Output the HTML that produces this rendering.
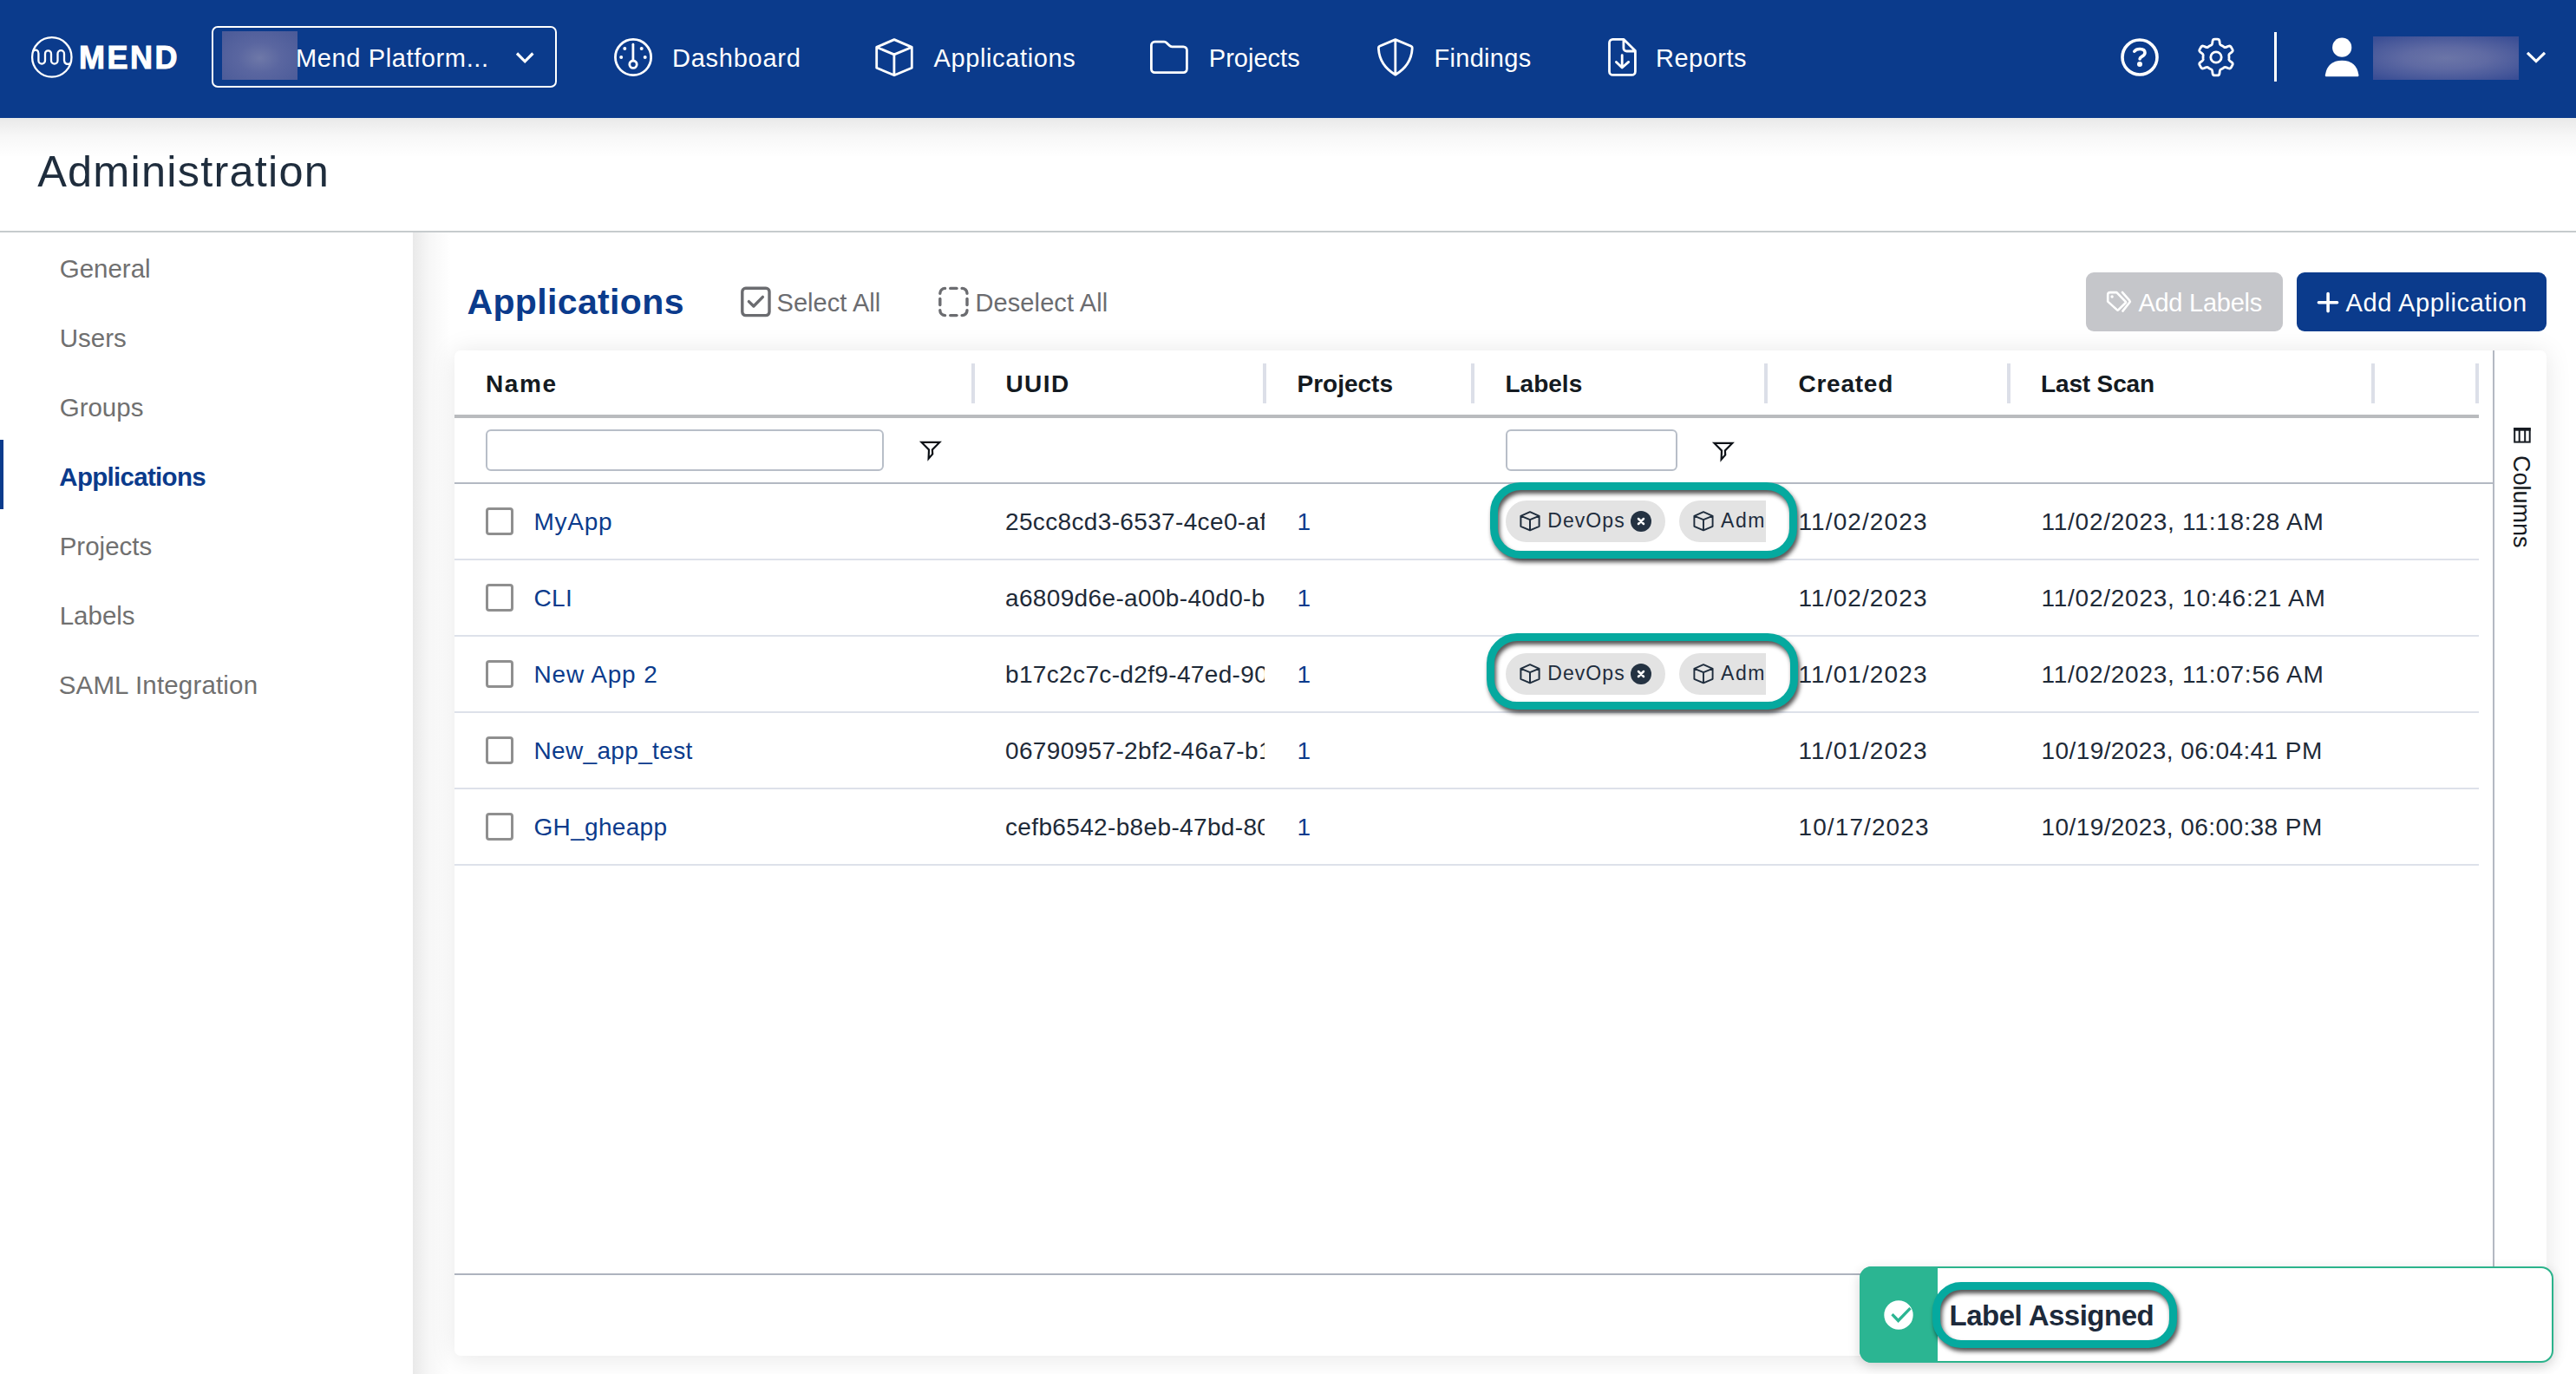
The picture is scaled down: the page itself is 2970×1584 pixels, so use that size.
<!DOCTYPE html>
<html><head><meta charset="utf-8"><title>Mend - Administration</title>
<style>
html,body{margin:0;padding:0;width:2970px;height:1584px;overflow:hidden;background:#fff;position:relative}
.a{position:absolute}
.t{position:absolute;white-space:nowrap;font-family:"Liberation Sans",sans-serif}
svg{overflow:visible}
</style></head><body>
<div class="a" style="left:0px;top:0px;width:2970px;height:136px;background:#0b3b8c"></div>
<div class="a" style="left:0px;top:136px;width:2970px;height:46px;background:linear-gradient(rgba(0,0,0,0.085),rgba(0,0,0,0.03) 45%,rgba(0,0,0,0))"></div>
<svg class="a" style="left:30px;top:36px;" width="60" height="60" viewBox="0 0 60 60"><g fill="none" stroke="#fff" stroke-width="2.3" stroke-linecap="round"><circle cx="29.8" cy="29.9" r="22.7"/><path d="M8.6 22.6 C11.5 20.8 14.2 21.5 14.4 25.5 L14.4 33.8 A3.8 3.8 0 0 0 22 33.8 L22 25.9 A3.5 3.5 0 0 1 29 25.9 L29 33.8 A3.75 3.75 0 0 0 36.5 33.8 L36.5 25.9 A3.75 3.75 0 0 1 44 25.9 L44 33.6 C44.2 37.4 47 38.6 50.6 37.4"/></g></svg>
<div class="t" style="left:91.00px;top:48.53px;font-size:36px;line-height:36px;color:#fff;font-weight:700;letter-spacing:2.5px;-webkit-text-stroke:1px #fff;">MEND</div>
<div class="a" style="left:244px;top:30px;width:398px;height:71px;border:2px solid #fff;border-radius:7px;box-sizing:border-box"></div>
<div class="a" style="left:256px;top:36px;width:87px;height:56px;background:radial-gradient(ellipse at 50% 55%,#6e78a8 0%,#5a66a0 40%,#4a5a98 100%)"></div>
<div class="t" style="left:341.00px;top:52.95px;font-size:29px;line-height:29px;color:#fff;font-weight:400;letter-spacing:0.62px;">Mend Platform...</div>
<svg class="a" style="left:590px;top:56px;" width="30" height="22" viewBox="0 0 30 22"><path d="M6 5.5 L15.2 14.8 L24.4 5.5" fill="none" stroke="#fff" stroke-width="3.2"/></svg>
<svg class="a" style="left:700px;top:36px;" width="60" height="60" viewBox="0 0 60 60"><g fill="none" stroke="#fff" stroke-width="2.8" stroke-linecap="round" stroke-linejoin="round"><circle cx="30.05" cy="30.05" r="20.6"/><path d="M29.9 15.2 L29.9 33.6"/><circle cx="30" cy="38.2" r="4.2"/></g><g fill="#fff"><circle cx="20.3" cy="20.1" r="2"/><circle cx="39.7" cy="20.1" r="2"/><circle cx="16.2" cy="30.1" r="2"/><circle cx="43.7" cy="30.1" r="2"/></g></svg>
<div class="t" style="left:775.00px;top:52.95px;font-size:29px;line-height:29px;color:#fff;font-weight:400;letter-spacing:0.75px;">Dashboard</div>
<svg class="a" style="left:1000px;top:36px;" width="60" height="60" viewBox="0 0 60 60"><g fill="none" stroke="#fff" stroke-width="2.8" stroke-linecap="round" stroke-linejoin="round"><path d="M31 9.6 L51.3 18.4 L51.3 42.2 L31 50.8 L10.7 42.2 L10.7 18.4 Z M10.9 18.5 L30.9 26.9 L51.1 18.5 M30.9 26.9 L30.9 50.6"/></g></svg>
<div class="t" style="left:1076.50px;top:52.95px;font-size:29px;line-height:29px;color:#fff;font-weight:400;letter-spacing:0.62px;">Applications</div>
<svg class="a" style="left:1318px;top:36px;" width="60" height="60" viewBox="0 0 60 60"><g fill="none" stroke="#fff" stroke-width="2.8" stroke-linecap="round" stroke-linejoin="round"><path d="M9.4 16.2 A4 4 0 0 1 13.4 12.2 L24.2 12.2 Q25.9 12.2 27.1 13.4 L30.3 16.6 Q31.5 17.8 33.2 17.8 L46.4 17.8 A4 4 0 0 1 50.4 21.8 L50.4 43.6 A4 4 0 0 1 46.4 47.6 L13.4 47.6 A4 4 0 0 1 9.4 43.6 Z"/></g></svg>
<div class="t" style="left:1393.80px;top:52.95px;font-size:29px;line-height:29px;color:#fff;font-weight:400;letter-spacing:0.02px;">Projects</div>
<svg class="a" style="left:1578px;top:36px;" width="60" height="60" viewBox="0 0 60 60"><g fill="none" stroke="#fff" stroke-width="2.8" stroke-linecap="round" stroke-linejoin="round"><path d="M30.8 9.6 L12.6 17.3 Q11.2 17.9 11.4 20.2 Q12.6 39.5 30.8 50.2 Q49 39.5 50.2 20.2 Q50.4 17.9 49 17.3 Z M30.8 9.8 L30.8 50"/></g></svg>
<div class="t" style="left:1653.50px;top:52.95px;font-size:29px;line-height:29px;color:#fff;font-weight:400;letter-spacing:0.3px;">Findings</div>
<svg class="a" style="left:1840px;top:36px;" width="60" height="60" viewBox="0 0 60 60"><g fill="none" stroke="#fff" stroke-width="2.8" stroke-linecap="round" stroke-linejoin="round"><path d="M19.5 9.4 L32.2 9.4 L45.4 22.6 L45.4 46.4 A4 4 0 0 1 41.4 50.4 L19.5 50.4 A4 4 0 0 1 15.5 46.4 L15.5 13.4 A4 4 0 0 1 19.5 9.4 Z M31.9 9.6 L31.9 19.4 A3.6 3.6 0 0 0 35.5 23 L45.2 23 M30.2 27.6 L30.2 41.8 M23.4 35.4 L30.2 42 L37.7 35.4"/></g></svg>
<div class="t" style="left:1909.00px;top:52.95px;font-size:29px;line-height:29px;color:#fff;font-weight:400;letter-spacing:0.5px;">Reports</div>
<svg class="a" style="left:2436px;top:36px;" width="60" height="60" viewBox="0 0 60 60"><g fill="none" stroke="#fff" stroke-width="3.6" stroke-linecap="round" stroke-linejoin="round"><circle cx="31" cy="30" r="20"/><path d="M24.8 23.2 Q26.8 20.5 31.2 20.5 Q37 20.6 37 24.7 Q37 27.3 33.6 29.1 Q31.2 30.4 31.1 31.9"/></g><circle cx="31" cy="38" r="3" fill="#fff"/></svg>
<svg class="a" style="left:2525px;top:36px;" width="60" height="60" viewBox="0 0 60 60"><g fill="none" stroke="#fff" stroke-width="2.8" stroke-linecap="round" stroke-linejoin="round"><path d="M24.72 15.98 Q25.49 15.69 25.76 13.51 L26.04 11.30 Q26.32 9.12 28.52 9.12 L31.48 9.12 Q33.68 9.12 33.96 11.30 L34.24 13.51 Q34.51 15.69 35.28 15.98 L36.04 16.27 L37.50 17.01 L38.87 17.90 L39.50 18.42 Q40.13 18.94 42.16 18.09 L44.21 17.23 Q46.24 16.37 47.34 18.28 L48.82 20.84 Q49.92 22.75 48.17 24.08 L46.40 25.42 Q44.64 26.75 44.78 27.56 L44.91 28.37 L45.00 30.00 L44.91 31.63 L44.78 32.44 Q44.64 33.25 46.40 34.58 L48.17 35.92 Q49.92 37.25 48.82 39.16 L47.34 41.72 Q46.24 43.63 44.21 42.77 L42.16 41.91 Q40.13 41.06 39.50 41.58 L38.87 42.10 L37.50 42.99 L36.04 43.73 L35.28 44.02 Q34.51 44.31 34.24 46.49 L33.96 48.70 Q33.68 50.88 31.48 50.88 L28.52 50.88 Q26.32 50.88 26.04 48.70 L25.76 46.49 Q25.49 44.31 24.72 44.02 L23.96 43.73 L22.50 42.99 L21.13 42.10 L20.50 41.58 Q19.87 41.06 17.84 41.91 L15.79 42.77 Q13.76 43.63 12.66 41.72 L11.18 39.16 Q10.08 37.25 11.83 35.92 L13.60 34.58 Q15.36 33.25 15.22 32.44 L15.09 31.63 L15.00 30.00 L15.09 28.37 L15.22 27.56 Q15.36 26.75 13.60 25.42 L11.83 24.08 Q10.08 22.75 11.18 20.84 L12.66 18.28 Q13.76 16.37 15.79 17.23 L17.84 18.09 Q19.87 18.94 20.50 18.42 L21.13 17.90 L22.50 17.01 L23.96 16.27 Z"/><circle cx="30" cy="30" r="6.2"/></g></svg>
<div class="a" style="left:2622px;top:37px;width:3px;height:57px;background:#fff"></div>
<svg class="a" style="left:2670px;top:36px;" width="60" height="60" viewBox="0 0 60 60"><g fill="#fff"><circle cx="30.2" cy="18.7" r="11.1"/><path d="M11.6 52.2 Q10.6 52.2 10.9 50.2 Q13.5 34 30.2 33.8 Q46.9 34 49.4 50.2 Q49.7 52.2 48.6 52.2 Z"/></g></svg>
<div class="a" style="left:2736px;top:42px;width:168px;height:50px;background:radial-gradient(ellipse 72% 62% at 50% 50%,#6b75a7 0%,#5f6aa3 40%,#4a5a9b 75%,#3a4e95 100%)"></div>
<svg class="a" style="left:2908px;top:52px;" width="30" height="26" viewBox="0 0 30 26"><path d="M6 8.8 L16 18.6 L26 8.8" fill="none" stroke="#fff" stroke-width="3.2"/></svg>
<div class="t" style="left:43.20px;top:172.75px;font-size:50.5px;line-height:50.5px;color:#1f2d3d;font-weight:400;letter-spacing:1.2px;">Administration</div>
<div class="a" style="left:0px;top:266px;width:2970px;height:2px;background:#c6cbcd"></div>
<div class="t" style="left:68.70px;top:294.53px;font-size:29.5px;line-height:29.5px;color:#707070;font-weight:400;letter-spacing:0.0px;">General</div>
<div class="t" style="left:68.70px;top:374.53px;font-size:29.5px;line-height:29.5px;color:#707070;font-weight:400;letter-spacing:0.0px;">Users</div>
<div class="t" style="left:68.70px;top:454.53px;font-size:29.5px;line-height:29.5px;color:#707070;font-weight:400;letter-spacing:0.0px;">Groups</div>
<div class="t" style="left:68.30px;top:534.53px;font-size:29.5px;line-height:29.5px;color:#0b3b8c;font-weight:700;letter-spacing:-0.7px;">Applications</div>
<div class="t" style="left:68.70px;top:614.53px;font-size:29.5px;line-height:29.5px;color:#707070;font-weight:400;letter-spacing:0.0px;">Projects</div>
<div class="t" style="left:68.70px;top:694.53px;font-size:29.5px;line-height:29.5px;color:#707070;font-weight:400;letter-spacing:0.0px;">Labels</div>
<div class="t" style="left:67.70px;top:774.53px;font-size:29.5px;line-height:29.5px;color:#707070;font-weight:400;letter-spacing:0.17px;">SAML Integration</div>
<div class="a" style="left:0px;top:507px;width:4px;height:80px;background:#0b3b8c"></div>
<div class="a" style="left:476px;top:268px;width:44px;height:1316px;background:linear-gradient(90deg,rgba(0,0,0,0.085),rgba(0,0,0,0.035) 40%,rgba(0,0,0,0))"></div>
<div class="a" style="left:524px;top:404px;width:2412px;height:1159px;background:#fff;border-radius:7px;box-shadow:0 2px 30px rgba(0,0,0,0.10)"></div>
<div class="t" style="left:538.50px;top:328.29px;font-size:41px;line-height:41px;color:#0b3b8c;font-weight:700;letter-spacing:0.36px;">Applications</div>
<svg class="a" style="left:845px;top:322px;" width="60" height="50" viewBox="0 0 60 50"><g fill="none" stroke="#6b6c70" stroke-width="3.4" stroke-linecap="round" stroke-linejoin="round"><rect x="10.8" y="10.3" width="31.2" height="31.3" rx="4"/><path d="M18.4 25.6 L23.9 31 L34.4 20.4"/></g></svg>
<div class="t" style="left:895.50px;top:334.95px;font-size:29px;line-height:29px;color:#6b6c70;font-weight:400;letter-spacing:0.05px;">Select All</div>
<svg class="a" style="left:1073px;top:322px;" width="60" height="50" viewBox="0 0 60 50"><g fill="none" stroke="#6b6c70" stroke-width="3.4" stroke-linecap="round" stroke-linejoin="round"><path d="M10.8 16.2 A5.8 5.8 0 0 1 16.6 10.4"/><path d="M22.7 10.4 L30 10.4"/><path d="M36.1 10.4 A5.8 5.8 0 0 1 42 16.2"/><path d="M10.8 22.4 L10.8 29.6"/><path d="M42 22.4 L42 29.6"/><path d="M10.8 35.8 A5.8 5.8 0 0 0 16.6 41.6"/><path d="M22.7 41.6 L30 41.6"/><path d="M36.1 41.6 A5.8 5.8 0 0 0 42 35.8"/></g></svg>
<div class="t" style="left:1124.50px;top:334.95px;font-size:29px;line-height:29px;color:#6b6c70;font-weight:400;letter-spacing:0.1px;">Deselect All</div>
<div class="a" style="left:2405px;top:314px;width:227px;height:68px;background:#c5c6ca;border-radius:9px"></div>
<svg class="a" style="left:2420px;top:328px;" width="46" height="40" viewBox="0 0 46 40"><g fill="none" stroke="#fff" stroke-width="2.6" stroke-linecap="round" stroke-linejoin="round"><path d="M10.2 11.8 Q10.2 9.1 12.9 9.1 L20.4 9.1 L30.8 19.8 Q31.4 20.4 30.8 21 L22.2 29.4 Q21.6 30 21 29.4 L10.2 19.6 Z"/><path d="M26.9 8.9 L35.2 18.3 Q36.2 19.5 35.2 20.7 L27.4 30.6"/></g><circle cx="15.1" cy="14" r="1.7" fill="#fff"/></svg>
<div class="t" style="left:2465.40px;top:334.95px;font-size:29px;line-height:29px;color:#fff;font-weight:400;letter-spacing:-0.25px;">Add Labels</div>
<div class="a" style="left:2648px;top:314px;width:288px;height:68px;background:#0b3b8c;border-radius:9px"></div>
<svg class="a" style="left:2665px;top:330px;" width="40" height="40" viewBox="0 0 40 40"><path d="M19.1 8.6 L19.1 28.8 M8.4 18.7 L29.6 18.7" fill="none" stroke="#fff" stroke-width="3.6" stroke-linecap="round"/></svg>
<div class="t" style="left:2704.50px;top:334.95px;font-size:29px;line-height:29px;color:#fff;font-weight:400;letter-spacing:0.62px;">Add Application</div>
<div class="a" style="left:524px;top:478px;width:2334px;height:4px;background:#b9bbbe"></div>
<div class="a" style="left:1120px;top:419px;width:4px;height:46px;background:#dcdfe8"></div>
<div class="a" style="left:1456px;top:419px;width:4px;height:46px;background:#dcdfe8"></div>
<div class="a" style="left:1696px;top:419px;width:4px;height:46px;background:#dcdfe8"></div>
<div class="a" style="left:2034px;top:419px;width:4px;height:46px;background:#dcdfe8"></div>
<div class="a" style="left:2314px;top:419px;width:4px;height:46px;background:#dcdfe8"></div>
<div class="a" style="left:2734px;top:419px;width:4px;height:46px;background:#dcdfe8"></div>
<div class="a" style="left:2854px;top:419px;width:4px;height:46px;background:#dcdfe8"></div>
<div class="t" style="left:560.00px;top:429.30px;font-size:28px;line-height:28px;color:#141a21;font-weight:700;letter-spacing:1.6px;">Name</div>
<div class="t" style="left:1159.50px;top:429.30px;font-size:28px;line-height:28px;color:#141a21;font-weight:700;letter-spacing:1.4px;">UUID</div>
<div class="t" style="left:1495.50px;top:429.30px;font-size:28px;line-height:28px;color:#141a21;font-weight:700;letter-spacing:0.0px;">Projects</div>
<div class="t" style="left:1735.50px;top:429.30px;font-size:28px;line-height:28px;color:#141a21;font-weight:700;letter-spacing:0.0px;">Labels</div>
<div class="t" style="left:2073.50px;top:429.30px;font-size:28px;line-height:28px;color:#141a21;font-weight:700;letter-spacing:0.75px;">Created</div>
<div class="t" style="left:2353.00px;top:429.30px;font-size:28px;line-height:28px;color:#141a21;font-weight:700;letter-spacing:-0.15px;">Last Scan</div>
<div class="a" style="left:524px;top:556px;width:2351px;height:2px;background:#b3b9c2"></div>
<div class="a" style="left:560px;top:495px;width:459px;height:48px;border:2px solid #b8bec8;border-radius:6px;box-sizing:border-box"></div>
<div class="a" style="left:1736px;top:495px;width:198px;height:48px;border:2px solid #b8bec8;border-radius:6px;box-sizing:border-box"></div>
<svg class="a" style="left:1050px;top:498px;" width="46" height="42" viewBox="0 0 46 42"><path d="M12.5 11.9 L33.3 11.9 L24.9 20.5 L25.2 25.4 L20.6 30.7 L21 20.5 Z" fill="none" stroke="#0d1117" stroke-width="2.2" stroke-linejoin="miter"/></svg>
<svg class="a" style="left:1964px;top:498.5px;" width="46" height="42" viewBox="0 0 46 42"><path d="M12.5 11.9 L33.3 11.9 L24.9 20.5 L25.2 25.4 L20.6 30.7 L21 20.5 Z" fill="none" stroke="#0d1117" stroke-width="2.2" stroke-linejoin="miter"/></svg>
<div class="a" style="left:524px;top:644px;width:2334px;height:2px;background:#dde1ea"></div>
<div class="a" style="left:560px;top:585px;width:32px;height:32px;border:3.2px solid #8f8f8f;border-radius:4px;box-sizing:border-box"></div>
<div class="t" style="left:615.50px;top:588.30px;font-size:28px;line-height:28px;color:#0b3b8c;font-weight:400;letter-spacing:0.75px;">MyApp</div>
<div class="a" style="left:1158px;top:570px;width:300px;height:60px;overflow:hidden"><div class="t" style="left:1px;top:18.30px;font-size:28px;line-height:28px;color:#1e2a38;letter-spacing:0.35px">25cc8cd3-6537-4ce0-af3e-81c2</div></div>
<div class="t" style="left:1495.50px;top:588.30px;font-size:28px;line-height:28px;color:#0b3b8c;font-weight:400;letter-spacing:0px;">1</div>
<div class="t" style="left:2073.50px;top:588.30px;font-size:28px;line-height:28px;color:#1e2a38;font-weight:400;letter-spacing:1.1px;">11/02/2023</div>
<div class="t" style="left:2353.50px;top:588.30px;font-size:28px;line-height:28px;color:#1e2a38;font-weight:400;letter-spacing:0.75px;">11/02/2023, 11:18:28 AM</div>
<div class="a" style="left:1700px;top:570px;width:336px;height:62px;overflow:hidden"><div class="a" style="left:36px;top:7.3px;width:184px;height:48px;border-radius:24px;background:#e3e3e3"></div><div class="a" style="left:236px;top:7.3px;width:140px;height:48px;border-radius:24px;background:#e3e3e3"></div></div>
<svg class="a" style="left:1752px;top:589px;" width="24" height="24" viewBox="0 0 24 24"><path d="M12 1.2 L22.6 5.8 L22.6 17.8 L12 22.4 L1.4 17.8 L1.4 5.8 Z M1.6 5.9 L12 10.2 L22.4 5.9 M12 10.2 L12 22.2" fill="none" stroke="#1f2d3d" stroke-width="2" stroke-linejoin="round"/></svg>
<div class="t" style="left:1784.30px;top:588.83px;font-size:23px;line-height:23px;color:#1f2d3d;font-weight:400;letter-spacing:1.05px;">DevOps</div>
<svg class="a" style="left:1879px;top:588px;" width="26" height="26" viewBox="0 0 26 26"><circle cx="13" cy="13" r="12" fill="#243242"/><path d="M10 10 L16 16 M16 10 L10 16" stroke="#fff" stroke-width="2.5" stroke-linecap="round"/></svg>
<svg class="a" style="left:1952px;top:589px;" width="24" height="24" viewBox="0 0 24 24"><path d="M12 1.2 L22.6 5.8 L22.6 17.8 L12 22.4 L1.4 17.8 L1.4 5.8 Z M1.6 5.9 L12 10.2 L22.4 5.9 M12 10.2 L12 22.2" fill="none" stroke="#1f2d3d" stroke-width="1.9" stroke-linejoin="round"/></svg>
<div class="a" style="left:1980px;top:570px;width:56px;height:60px;overflow:hidden"><div class="t" style="left:4px;top:18.83px;font-size:23px;line-height:23px;color:#1f2d3d;letter-spacing:1.6px">Admi</div></div>
<div class="a" style="left:1718px;top:556px;width:354px;height:88px;border:9px solid #05a99f;border-radius:35px;box-sizing:border-box;filter:drop-shadow(2.5px 4.5px 2.6px rgba(0,0,0,0.68))"></div>
<div class="a" style="left:524px;top:732px;width:2334px;height:2px;background:#dde1ea"></div>
<div class="a" style="left:560px;top:673px;width:32px;height:32px;border:3.2px solid #8f8f8f;border-radius:4px;box-sizing:border-box"></div>
<div class="t" style="left:615.50px;top:676.30px;font-size:28px;line-height:28px;color:#0b3b8c;font-weight:400;letter-spacing:0.3px;">CLI</div>
<div class="a" style="left:1158px;top:658px;width:300px;height:60px;overflow:hidden"><div class="t" style="left:1px;top:18.30px;font-size:28px;line-height:28px;color:#1e2a38;letter-spacing:0.35px">a6809d6e-a00b-40d0-b6a1-93f0</div></div>
<div class="t" style="left:1495.50px;top:676.30px;font-size:28px;line-height:28px;color:#0b3b8c;font-weight:400;letter-spacing:0px;">1</div>
<div class="t" style="left:2073.50px;top:676.30px;font-size:28px;line-height:28px;color:#1e2a38;font-weight:400;letter-spacing:1.1px;">11/02/2023</div>
<div class="t" style="left:2353.50px;top:676.30px;font-size:28px;line-height:28px;color:#1e2a38;font-weight:400;letter-spacing:0.75px;">11/02/2023, 10:46:21 AM</div>
<div class="a" style="left:524px;top:820px;width:2334px;height:2px;background:#dde1ea"></div>
<div class="a" style="left:560px;top:761px;width:32px;height:32px;border:3.2px solid #8f8f8f;border-radius:4px;box-sizing:border-box"></div>
<div class="t" style="left:615.50px;top:764.30px;font-size:28px;line-height:28px;color:#0b3b8c;font-weight:400;letter-spacing:0.85px;">New App 2</div>
<div class="a" style="left:1158px;top:746px;width:300px;height:60px;overflow:hidden"><div class="t" style="left:1px;top:18.30px;font-size:28px;line-height:28px;color:#1e2a38;letter-spacing:0.35px">b17c2c7c-d2f9-47ed-90c4-1a2b</div></div>
<div class="t" style="left:1495.50px;top:764.30px;font-size:28px;line-height:28px;color:#0b3b8c;font-weight:400;letter-spacing:0px;">1</div>
<div class="t" style="left:2073.50px;top:764.30px;font-size:28px;line-height:28px;color:#1e2a38;font-weight:400;letter-spacing:1.1px;">11/01/2023</div>
<div class="t" style="left:2353.50px;top:764.30px;font-size:28px;line-height:28px;color:#1e2a38;font-weight:400;letter-spacing:0.75px;">11/02/2023, 11:07:56 AM</div>
<div class="a" style="left:1700px;top:746px;width:336px;height:62px;overflow:hidden"><div class="a" style="left:36px;top:7.3px;width:184px;height:48px;border-radius:24px;background:#e3e3e3"></div><div class="a" style="left:236px;top:7.3px;width:140px;height:48px;border-radius:24px;background:#e3e3e3"></div></div>
<svg class="a" style="left:1752px;top:765px;" width="24" height="24" viewBox="0 0 24 24"><path d="M12 1.2 L22.6 5.8 L22.6 17.8 L12 22.4 L1.4 17.8 L1.4 5.8 Z M1.6 5.9 L12 10.2 L22.4 5.9 M12 10.2 L12 22.2" fill="none" stroke="#1f2d3d" stroke-width="2" stroke-linejoin="round"/></svg>
<div class="t" style="left:1784.30px;top:764.83px;font-size:23px;line-height:23px;color:#1f2d3d;font-weight:400;letter-spacing:1.05px;">DevOps</div>
<svg class="a" style="left:1879px;top:764px;" width="26" height="26" viewBox="0 0 26 26"><circle cx="13" cy="13" r="12" fill="#243242"/><path d="M10 10 L16 16 M16 10 L10 16" stroke="#fff" stroke-width="2.5" stroke-linecap="round"/></svg>
<svg class="a" style="left:1952px;top:765px;" width="24" height="24" viewBox="0 0 24 24"><path d="M12 1.2 L22.6 5.8 L22.6 17.8 L12 22.4 L1.4 17.8 L1.4 5.8 Z M1.6 5.9 L12 10.2 L22.4 5.9 M12 10.2 L12 22.2" fill="none" stroke="#1f2d3d" stroke-width="1.9" stroke-linejoin="round"/></svg>
<div class="a" style="left:1980px;top:746px;width:56px;height:60px;overflow:hidden"><div class="t" style="left:4px;top:18.83px;font-size:23px;line-height:23px;color:#1f2d3d;letter-spacing:1.6px">Admi</div></div>
<div class="a" style="left:1714px;top:730px;width:359px;height:88px;border:9px solid #05a99f;border-radius:35px;box-sizing:border-box;filter:drop-shadow(2.5px 4.5px 2.6px rgba(0,0,0,0.68))"></div>
<div class="a" style="left:524px;top:908px;width:2334px;height:2px;background:#dde1ea"></div>
<div class="a" style="left:560px;top:849px;width:32px;height:32px;border:3.2px solid #8f8f8f;border-radius:4px;box-sizing:border-box"></div>
<div class="t" style="left:615.50px;top:852.30px;font-size:28px;line-height:28px;color:#0b3b8c;font-weight:400;letter-spacing:0.34px;">New_app_test</div>
<div class="a" style="left:1158px;top:834px;width:300px;height:60px;overflow:hidden"><div class="t" style="left:1px;top:18.30px;font-size:28px;line-height:28px;color:#1e2a38;letter-spacing:0.35px">06790957-2bf2-46a7-b1d5-7e3c</div></div>
<div class="t" style="left:1495.50px;top:852.30px;font-size:28px;line-height:28px;color:#0b3b8c;font-weight:400;letter-spacing:0px;">1</div>
<div class="t" style="left:2073.50px;top:852.30px;font-size:28px;line-height:28px;color:#1e2a38;font-weight:400;letter-spacing:1.1px;">11/01/2023</div>
<div class="t" style="left:2353.50px;top:852.30px;font-size:28px;line-height:28px;color:#1e2a38;font-weight:400;letter-spacing:0.42px;">10/19/2023, 06:04:41 PM</div>
<div class="a" style="left:524px;top:996px;width:2334px;height:2px;background:#dde1ea"></div>
<div class="a" style="left:560px;top:937px;width:32px;height:32px;border:3.2px solid #8f8f8f;border-radius:4px;box-sizing:border-box"></div>
<div class="t" style="left:615.50px;top:940.30px;font-size:28px;line-height:28px;color:#0b3b8c;font-weight:400;letter-spacing:0.32px;">GH_gheapp</div>
<div class="a" style="left:1158px;top:922px;width:300px;height:60px;overflow:hidden"><div class="t" style="left:1px;top:18.30px;font-size:28px;line-height:28px;color:#1e2a38;letter-spacing:0.35px">cefb6542-b8eb-47bd-80f2-4d6a</div></div>
<div class="t" style="left:1495.50px;top:940.30px;font-size:28px;line-height:28px;color:#0b3b8c;font-weight:400;letter-spacing:0px;">1</div>
<div class="t" style="left:2073.50px;top:940.30px;font-size:28px;line-height:28px;color:#1e2a38;font-weight:400;letter-spacing:1.1px;">10/17/2023</div>
<div class="t" style="left:2353.50px;top:940.30px;font-size:28px;line-height:28px;color:#1e2a38;font-weight:400;letter-spacing:0.42px;">10/19/2023, 06:00:38 PM</div>
<div class="a" style="left:2874px;top:404px;width:2px;height:1159px;background:#b4b9c2"></div>
<svg class="a" style="left:2886px;top:484px;" width="44" height="40" viewBox="0 0 44 40"><g fill="#161b22"><rect x="12.2" y="9.1" width="19.5" height="3.6"/></g><g fill="none" stroke="#161b22" stroke-width="2"><rect x="13.2" y="10.1" width="17.5" height="15.5"/><path d="M18.7 12 L18.7 25.6 M25.2 12 L25.2 25.6"/></g></svg>
<div class="t" style="left:2853.5px;top:563.5px;width:105px;height:27px;font-size:27px;line-height:27px;color:#161b22;transform:rotate(90deg);transform-origin:50% 50%;text-align:center;letter-spacing:0px">Columns</div>
<div class="a" style="left:524px;top:1468px;width:2350px;height:2px;background:#aeb3be"></div>
<div class="a" style="left:2144px;top:1460px;width:800px;height:111px;background:#fff;border:2px solid #2bb38b;border-radius:14px;box-sizing:border-box;box-shadow:0 4px 14px rgba(0,0,0,0.16);overflow:hidden"></div>
<div class="a" style="left:2144px;top:1460px;width:90px;height:111px;background:#2bb592;border-radius:14px 0 0 14px"></div>
<svg class="a" style="left:2168px;top:1495px;" width="42" height="42" viewBox="0 0 42 42"><circle cx="21" cy="21" r="16.7" fill="#fff"/><path d="M13.5 20.1 L20.6 27.5 L34.5 13.2" fill="none" stroke="#2bb592" stroke-width="3.3"/></svg>
<div class="t" style="left:2247.50px;top:1500.47px;font-size:33px;line-height:33px;color:#1d2a3b;font-weight:700;letter-spacing:-0.5px;">Label Assigned</div>
<div class="a" style="left:2228px;top:1478px;width:282px;height:76px;border:9px solid #05a99f;border-radius:33px;box-sizing:border-box;filter:drop-shadow(2.5px 4.5px 2.6px rgba(0,0,0,0.68))"></div>
</body></html>
